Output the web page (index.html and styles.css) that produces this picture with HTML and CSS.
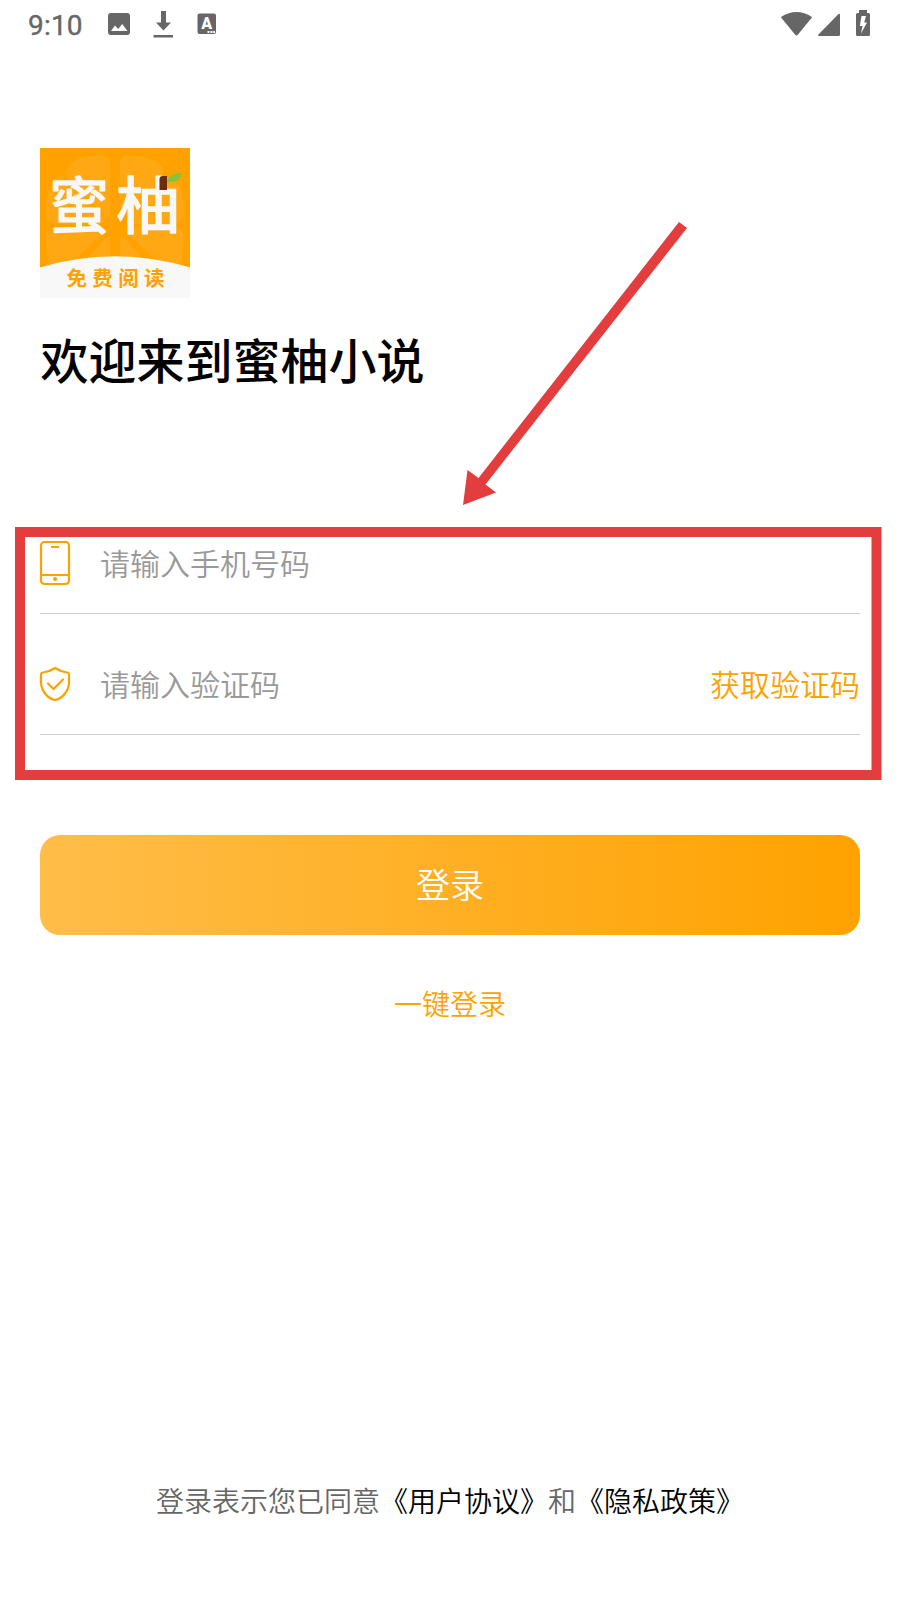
FILE: index.html
```
<!DOCTYPE html>
<html lang="zh-CN">
<head>
<meta charset="utf-8">
<title>登录</title>
<link rel="stylesheet" href="styles.css">
</head>
<body>
<div class="screen">
  <header class="status">
    <span class="clock">9:10</span>
    <svg class="status-left" viewBox="0 0 112 50" width="112" height="50">
      <path fill-rule="evenodd" d="M4 13H20Q23 13 23 16V32Q23 35 20 35H4Q1 35 1 32V16Q1 13 4 13ZM4 31H20.500L15.200 24L11.200 29L8 25.500Z"/>
      <path d="M54 11H59V22.500H64L56.500 30.500L49 22.500H54ZM46.500 35H66V37.500H46.500Z"/>
      <path d="M92.500 13.500H107Q109 13.500 109 15.500V32Q109 34 107 34H92.500Q90.500 34 90.500 32V15.500Q90.500 13.500 92.500 13.500Z"/>
      <text class="badge-letter" x="99.800" y="29">A</text>
      <path class="dots" d="M100.500 31H102.500V33H100.500ZM103.500 31H105.500V33H103.500ZM106.200 31H108V33H106.200Z"/>
    </svg>
    <svg class="status-right" viewBox="0 0 92 50" width="92" height="50">
      <path d="M1 17Q16.500 7 32 17L31.500 18L18 34.500Q16.500 36.500 15 34.500L1.500 18Z"/>
      <path d="M60 15V34.500Q60 36 58.500 36H39Q37.500 36 38.500 34.500L58 14.500Q60 13 60 15Z"/>
      <path fill-rule="evenodd" d="M79 10H87V13H88.500Q90 13 90 14.500V34.500Q90 36 88.500 36H77.500Q76 36 76 34.500V14.500Q76 13 77.500 13H79ZM81.500 16L79.800 26H82.500L81 33.500L87 22.500H84.200L86 16Z"/>
    </svg>
  </header>

  <main class="content">
    <svg class="logo" viewBox="0 0 150 150" width="150" height="150">
      <rect width="150" height="150" fill="#ffa200"/>
      <g fill="#ffa813">
        <path d="M27 22Q32 8 58 7Q70 7 70 15V72L30 33Q26 29 27 22Z"/>
        <path d="M80 15Q80 7 90 7Q117 9 123 20V27Q122 32 118 36L80 72Z"/>
        <path d="M16 29Q22 27 28 33L63 70Q66 75 61 76H16Q7 75 6 66Q5 43 16 29Z"/>
        <path d="M134 29Q144 43 144 65Q143 75 134 76H89Q84 75 87 70L122 33Q128 27 134 29Z"/>
        <path d="M6 90Q6 80 16 79H60Q67 81 62 86L30 116L10 119Q6 108 6 90Z"/>
        <path d="M144 90Q144 80 134 79H90Q83 81 88 86L120 116L140 119Q144 108 144 90Z"/>
        <path d="M38 120L66 90Q70 87 70 92V120ZM112 120L84 90Q80 87 80 92V120Z"/>
      </g>
      <path d="M0 119.500Q75 97 150 119.500V150H0Z" fill="#f8f8f8"/>
      <text class="logo-name" x="9" y="81" textLength="60" lengthAdjust="spacingAndGlyphs">蜜</text>
      <text class="logo-name" x="76" y="81" textLength="64" lengthAdjust="spacingAndGlyphs">柚</text>
      <path d="M119.500 42V31Q119.500 28 123 28H127V42Z" fill="#6b2d0b"/>
      <path d="M127 35Q128 24 142 25Q140 35 130 34Z" fill="#8bc03d"/>
      <text class="logo-tag" x="26.500" y="137.500" textLength="98">免费阅读</text>
    </svg>
    <h1 class="title">欢迎来到蜜柚小说</h1>

    <div class="field">
      <svg class="icon" viewBox="0 0 30 44" width="30" height="44">
        <rect x="1" y="1" width="28" height="42" rx="3.500"/>
        <path d="M1 34H29M11 6H19"/>
        <circle class="solid" cx="15" cy="38" r="2"/>
      </svg>
      <span class="placeholder">请输入手机号码</span>
    </div>
    <div class="field">
      <svg class="icon" viewBox="0 0 30 34" width="30" height="34">
        <path d="M15 1Q21 5 27 5.500Q29 5.500 29 8V15C29 23 23.500 31 15 33C6.500 31 1 23 1 15V8Q1 5.500 3 5.500Q9 5 15 1Z"/>
        <path d="M8 16.500L13.500 22L23 12.500" stroke-linecap="round"/>
      </svg>
      <span class="placeholder">请输入验证码</span>
      <a class="get-code">获取验证码</a>
    </div>

    <button class="login">登录</button>
    <a class="quick">一键登录</a>
  </main>

  <footer class="agreement">登录表示您已同意<a>《用户协议》</a>和<a>《隐私政策》</a></footer>

  <svg class="annotation" viewBox="0 0 900 1600" width="900" height="1600">
    <path d="M679 222L687 228L485.500 484.500L496 492.500L463 505L467.500 470L478.500 478Z"/>
    <path class="frame" d="M20 532H876.500V775H20Z"/>
  </svg>
</div>
</body>
</html>
```
FILE: styles.css
```
body {
  margin: 0;
  background: #fff;
  font-family: "Noto Sans CJK SC", sans-serif;
  font-weight: 350;
}

.screen {
  position: relative;
  display: flex;
  flex-direction: column;
  width: 900px;
  height: 1600px;
  overflow: hidden;
  background: #fff;
}

.status {
  display: flex;
  height: 50px;
  padding: 0 28px;
  color: #666;
  fill: #666;
}

.clock {
  width: 79px;
  font: 400 28px/51px Roboto, sans-serif;
  letter-spacing: 0.2px;
  -webkit-text-stroke: 0.4px #666;
}

.status-right {
  margin-left: auto;
}

.badge-letter {
  fill: #fff;
  font: 900 16px Roboto, sans-serif;
  text-anchor: middle;
}

.dots {
  fill: #fff;
}

.content {
  display: flex;
  flex-direction: column;
  padding: 98px 40px 0;
}

.logo-name {
  fill: #f8f8f8;
  font: 400 62px "Noto Sans CJK SC", sans-serif;
  stroke: #f8f8f8;
  stroke-width: 1.6;
  stroke-linecap: round;
  stroke-linejoin: round;
}

.logo-tag {
  fill: #ffa200;
  font: 700 20.5px "Noto Sans CJK SC", sans-serif;
}

.title {
  height: 70px;
  margin: 25px 0 120px 0.5px;
  font-size: 48px;
  font-weight: 500;
  line-height: 70px;
  color: #000;
}

.field {
  display: flex;
  align-items: center;
  height: 100px;
  border-bottom: 1px solid #d0d0d0;
}

.field + .field {
  margin-top: 20px;
}

.icon {
  fill: none;
  stroke: #ffa200;
  stroke-width: 2.2;
  overflow: visible;
}

.icon .solid {
  fill: #ffa200;
  stroke: none;
}

.placeholder,
.get-code {
  padding-bottom: 2px;
  font-size: 30px;
  line-height: 44px;
}

.placeholder {
  margin-left: 30px;
  color: #999;
}

.get-code {
  margin-left: auto;
  color: #ffa200;
}

.login {
  height: 100px;
  margin-top: 100px;
  padding: 0 0 2px;
  border: 0;
  border-radius: 20px;
  background: linear-gradient(90deg, #ffbd49, #ffa200);
  color: #fff;
  font: 350 34px/50px "Noto Sans CJK SC", sans-serif;
}

.quick {
  margin-top: 48px;
  font-size: 28px;
  line-height: 40px;
  text-align: center;
  color: #ffa200;
}

.agreement {
  margin-top: auto;
  padding-bottom: 80px;
  font-size: 28px;
  line-height: 40px;
  text-align: center;
  color: #666;
}

.agreement a {
  color: #000;
}

.annotation {
  position: absolute;
  top: 0;
  left: 0;
  fill: #e43d3d;
  pointer-events: none;
}

.annotation .frame {
  fill: none;
  stroke: #e43d3d;
  stroke-width: 10;
}
```
